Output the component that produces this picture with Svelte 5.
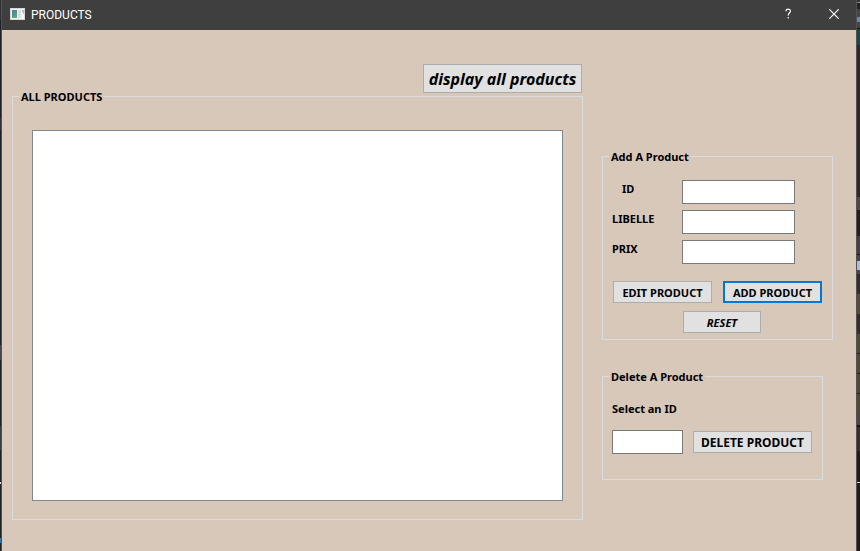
<script>
  let id = $state('');
  let libelle = $state('');
  let prix = $state('');
  let selected = $state('');
  let items = $state([]);
  let shown = $state([]);

  const add = () => {
    if (id) items = [...items, { id, libelle, prix }];
  };
  const edit = () => {
    items = items.map((p) => (p.id === id ? { id, libelle, prix } : p));
  };
  const reset = () => {
    id = libelle = prix = '';
  };
  const remove = () => {
    items = items.filter((p) => p.id !== selected);
  };
</script>

<div class="desktop">
  <div class="strip left"></div>
  <div class="window">
    <header>
      <svg class="app-icon" width="15" height="12" viewBox="0 0 15 12" aria-hidden="true">
        <defs>
          <linearGradient id="pane" x1="0" y1="0" x2="0.6" y2="1">
            <stop offset="0" stop-color="#4a78a0" />
            <stop offset="1" stop-color="#58ab7c" />
          </linearGradient>
        </defs>
        <rect width="15" height="12" fill="#d6d6d6" />
        <rect x="1" y="1" width="13" height="10" fill="#f5f5f5" />
        <rect x="2" y="2" width="5" height="8" fill="url(#pane)" />
        <rect x="8" y="2" width="3" height="8" fill="#dedede" />
        <path d="M12 2h2v4h-1V4h-1z" fill="#9cc8b4" />
      </svg>
      <h1>PRODUCTS</h1>
      <button class="caption" aria-label="Help">
        <svg width="9" height="12" viewBox="0 0 9 12"><path d="M2 3.2V2.4C2.6 .6 6.4 .6 6.4 3C6.4 5 4.2 5 4.2 7.4M4.2 9v1.6" fill="none" stroke="#fff" stroke-width="1.2" /></svg>
      </button>
      <button class="caption" aria-label="Close">
        <svg width="10" height="10" viewBox="0 0 10 10"><path d="M.3 .3l9.4 9.4M9.7 .3l-9.4 9.4" stroke="#fff" stroke-width="1.2" /></svg>
      </button>
    </header>

    <main>
      <section class="list">
        <button class="display" onclick={() => (shown = items)}>display all products</button>
        <fieldset class="all">
          <legend>ALL PRODUCTS</legend>
          <div class="view">
            {#each shown as p}
              <div>{p.id} {p.libelle} {p.prix}</div>
            {/each}
          </div>
        </fieldset>
      </section>

      <section class="forms">
        <fieldset class="add">
          <legend>Add A Product</legend>
          <div class="row">
            <label class="indent" for="id">ID</label>
            <input id="id" bind:value={id} />
          </div>
          <div class="row">
            <label for="libelle">LIBELLE</label>
            <input id="libelle" bind:value={libelle} />
          </div>
          <div class="row">
            <label for="prix">PRIX</label>
            <input id="prix" bind:value={prix} />
          </div>
          <div class="actions">
            <button onclick={edit}>EDIT PRODUCT</button>
            <button class="default" onclick={add}>ADD PRODUCT</button>
          </div>
          <button class="reset" onclick={reset}>RESET</button>
        </fieldset>

        <fieldset class="delete">
          <legend>Delete A Product</legend>
          <label for="selected">Select an ID</label>
          <div class="pick">
            <input id="selected" bind:value={selected} />
            <button onclick={remove}>DELETE PRODUCT</button>
          </div>
        </fieldset>
      </section>
    </main>
  </div>
  <div class="strip right"></div>
</div>

<style>
  :global(body) {
    margin: 0;
    background: #d7c8b9;
  }
  .desktop,
  .desktop * {
    box-sizing: border-box;
  }
  .desktop {
    display: flex;
    min-height: 100vh;
    font: bold 11px/18px 'Noto Sans', 'Open Sans', sans-serif;
    color: #000;
  }
  .strip.left {
    width: 2px;
    border-right: 1px solid #55504d;
    background: linear-gradient(#303236 0 20px, #1d2027 20px 118px, #303236 118px 130px, #1d2027 130px 345px, #45474b 345px 360px, #1c1f24 360px 426px, #383b40 426px 450px, #1c1f24 450px 482px, #ddd 482px 484px, #1c1f24 484px 538px, #2d78b8 538px 543px, #1c1f24 543px);
  }
  .strip.right {
    width: 4px;
    border-left: 1px solid #55504d;
    background: linear-gradient(#333 0 2px, #888 2px 3px, #222 3px 9px, #444 9px 17px, #6886b8 17px 22px, #444 22px 28px, #111 28px 29px, #0f4a50 29px 45px, #292929 45px 197px, #4a4a4a 197px 210px, #202020 210px 236px, #404248 236px 254px, #111 254px 255px, #45474d 255px 261px, #aebbe0 261px 270px, #45474d 270px 274px, #2c3031 274px 294px, #554c3f 294px 314px, #2c3031 314px 334px, #4a4f38 334px 353px, #222 353px 354px, #4a4f38 354px 373px, #222 373px 374px, #4a4f38 374px 393px, #222 393px 394px, #4a4f38 394px 412px, #4a4a4a 412px 425px, #111 425px 427px, #303232 427px 451px, #1c1c1c 451px 482px, #ddd 482px 483px, #1c1c1c 483px);
  }
  .window {
    flex: 1;
    background: #d7c8b9;
  }
  header {
    display: flex;
    align-items: center;
    height: 30px;
    padding-left: 8px;
    background: #3f3f3f;
    color: #fff;
  }
  .app-icon {
    margin-bottom: 2px;
  }
  h1 {
    flex: 1;
    margin: 0 0 0 6px;
    font: 12px/16px Roboto, 'Noto Sans', sans-serif;
  }
  .caption {
    display: grid;
    place-items: center;
    width: 45px;
    height: 28px;
    margin-bottom: 2px;
    padding: 0;
    border: 0;
    background: none;
  }
  main {
    display: flex;
    gap: 19px;
    padding: 34px 23px 31px 10px;
  }
  .list {
    flex: 1;
    display: flex;
    flex-direction: column;
  }
  fieldset {
    min-width: 0;
    margin: 0;
    padding: 0 9px;
    border: 1px solid #dcdcdc;
  }
  legend {
    margin-left: -3px;
    padding: 0 2px;
    line-height: 13px;
  }
  button {
    height: 22px;
    padding: 1px 0 0;
    border: 1px solid #adadad;
    background: #e1e1e1;
    color: inherit;
    font: inherit;
    line-height: 20px;
    white-space: nowrap;
  }
  input {
    height: 24px;
    padding: 0 3px;
    border: 1px solid #7a7a7a;
    background: #fff;
    font: inherit;
  }
  .display {
    align-self: flex-end;
    width: 159px;
    height: 29px;
    margin-right: 1px;
    font-size: 16px;
    font-style: italic;
    line-height: 26px;
  }
  .all {
    margin-top: -3px;
    padding: 27px 19px 18px;
  }
  .all legend {
    margin-left: -13px;
  }
  .view {
    height: 371px;
    border: 1px solid #828790;
    background: #fff;
    overflow: auto;
  }
  .forms {
    width: 231px;
    padding-top: 86px;
  }
  .add {
    padding: 17px 9px 6px;
  }
  .row {
    display: flex;
    margin-bottom: 6px;
  }
  .row label {
    width: 70px;
  }
  .row .indent {
    padding-left: 10px;
  }
  .row input {
    width: 113px;
  }
  .actions {
    display: flex;
    justify-content: space-between;
    margin: 17px 1px 8px;
  }
  .actions button {
    width: 99px;
  }
  .actions .default {
    border: 2px solid #0078d7;
    line-height: 18px;
  }
  .reset {
    display: block;
    width: 78px;
    margin-left: 71px;
    font-style: italic;
  }
  .delete {
    width: 221px;
    margin-top: 30px;
    padding: 17px 10px 25px 9px;
  }
  .delete label {
    display: block;
  }
  .pick {
    display: flex;
    align-items: center;
    justify-content: space-between;
    margin-top: 12px;
  }
  .pick input {
    width: 71px;
  }
  .pick button {
    width: 119px;
    font-size: 12px;
  }
</style>
